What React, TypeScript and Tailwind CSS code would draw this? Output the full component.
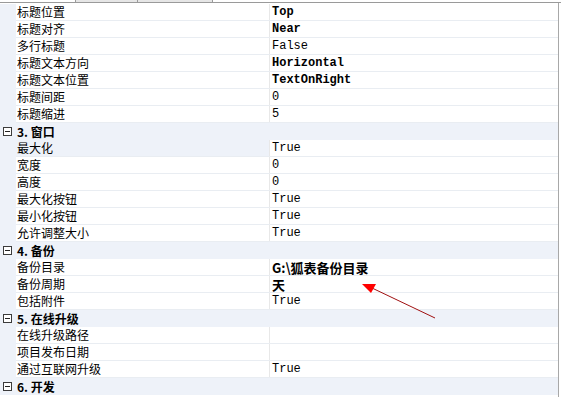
type Row =
    | { kind: 'group'; title: string }
    | { kind: 'prop'; label: string; value: string; bold?: boolean; big?: boolean; selected?: boolean }

const rows: Row[] = [
    { kind: 'prop', label: '标题位置', value: 'Top', bold: true },
    { kind: 'prop', label: '标题对齐', value: 'Near', bold: true },
    { kind: 'prop', label: '多行标题', value: 'False' },
    { kind: 'prop', label: '标题文本方向', value: 'Horizontal', bold: true },
    { kind: 'prop', label: '标题文本位置', value: 'TextOnRight', bold: true },
    { kind: 'prop', label: '标题间距', value: '0' },
    { kind: 'prop', label: '标题缩进', value: '5' },
    { kind: 'group', title: '3. 窗口' },
    { kind: 'prop', label: '最大化', value: 'True', selected: true },
    { kind: 'prop', label: '宽度', value: '0' },
    { kind: 'prop', label: '高度', value: '0' },
    { kind: 'prop', label: '最大化按钮', value: 'True' },
    { kind: 'prop', label: '最小化按钮', value: 'True' },
    { kind: 'prop', label: '允许调整大小', value: 'True' },
    { kind: 'group', title: '4. 备份' },
    { kind: 'prop', label: '备份目录', value: 'G:\\狐表备份目录', bold: true, big: true },
    { kind: 'prop', label: '备份周期', value: '天', bold: true, big: true },
    { kind: 'prop', label: '包括附件', value: 'True' },
    { kind: 'group', title: '5. 在线升级' },
    { kind: 'prop', label: '在线升级路径', value: '' },
    { kind: 'prop', label: '项目发布日期', value: '' },
    { kind: 'prop', label: '通过互联网升级', value: 'True' },
    { kind: 'group', title: '6. 开发' },
]

const cjk = "font-['Noto_Sans_CJK_SC',sans-serif]"
const mono = "font-['Liberation_Mono','Noto_Sans_CJK_SC',monospace]"

const MinusBox = () => (
    <span className="relative inline-block w-[9px] h-[9px] border border-[#3c3c3c] bg-white">
        <span className="absolute left-[1px] right-[1px] top-[3px] h-[1px] bg-[#222]" />
    </span>
)

export default function App() {
    return (
        <div className={`relative w-[561px] h-[397px] overflow-hidden bg-white text-[12px] text-black ${cjk}`}>
            <div className="flex h-[3px] border-b border-[#9a9a9a]">
                <div className="w-[75px]" />
                <div className="w-[62px] border-l border-[#9a9a9a] bg-[#e6e6e6]" />
                <div className="w-[76px] border-l border-r border-[#9a9a9a] bg-[#e6e6e6]" />
            </div>
            <div className="flex h-[394px]">
                <div className="w-[558px] pt-[1px]">
                    {rows.map((r, i) =>
                        r.kind === 'group' ? (
                            <div key={i} className="flex items-center h-[17px] bg-[#eef2f9]">
                                <div className="w-[16px] flex items-center pl-[3px]">
                                    <MinusBox />
                                </div>
                                <span className="pl-[1px] font-bold leading-none">{r.title}</span>
                            </div>
                        ) : (
                            <div key={i} className="flex h-[17px]">
                                <div className="w-[16px] bg-[#eef2f9]" />
                                <div className="flex flex-1 border-b border-[#e9edf2]">
                                    <div
                                        className={`w-[254px] pl-[1px] flex items-center leading-none border-r border-[#e8e8e8] ${
                                            r.selected ? 'bg-[#eef2f9]' : ''
                                        }`}
                                    >
                                        {r.label}
                                    </div>
                                    <div
                                        className={`flex-1 pl-[2px] flex items-center leading-none overflow-hidden ${
                                            r.big ? `text-[13px] font-bold ${cjk}` : `${mono} ${r.bold ? 'font-bold' : ''}`
                                        }`}
                                    >
                                        {r.value}
                                    </div>
                                </div>
                            </div>
                        )
                    )}
                </div>
                <div className="w-[1px] bg-[#a8a8a8]" />
                <div className="flex-1 bg-white" />
            </div>
            <svg className="absolute left-0 top-0" width="561" height="397">
                <line x1="435" y1="318" x2="372" y2="288" stroke="#a01010" strokeWidth="1" />
                <polygon points="362,284 376,284 371,293" fill="#ff0000" />
            </svg>
        </div>
    )
}
